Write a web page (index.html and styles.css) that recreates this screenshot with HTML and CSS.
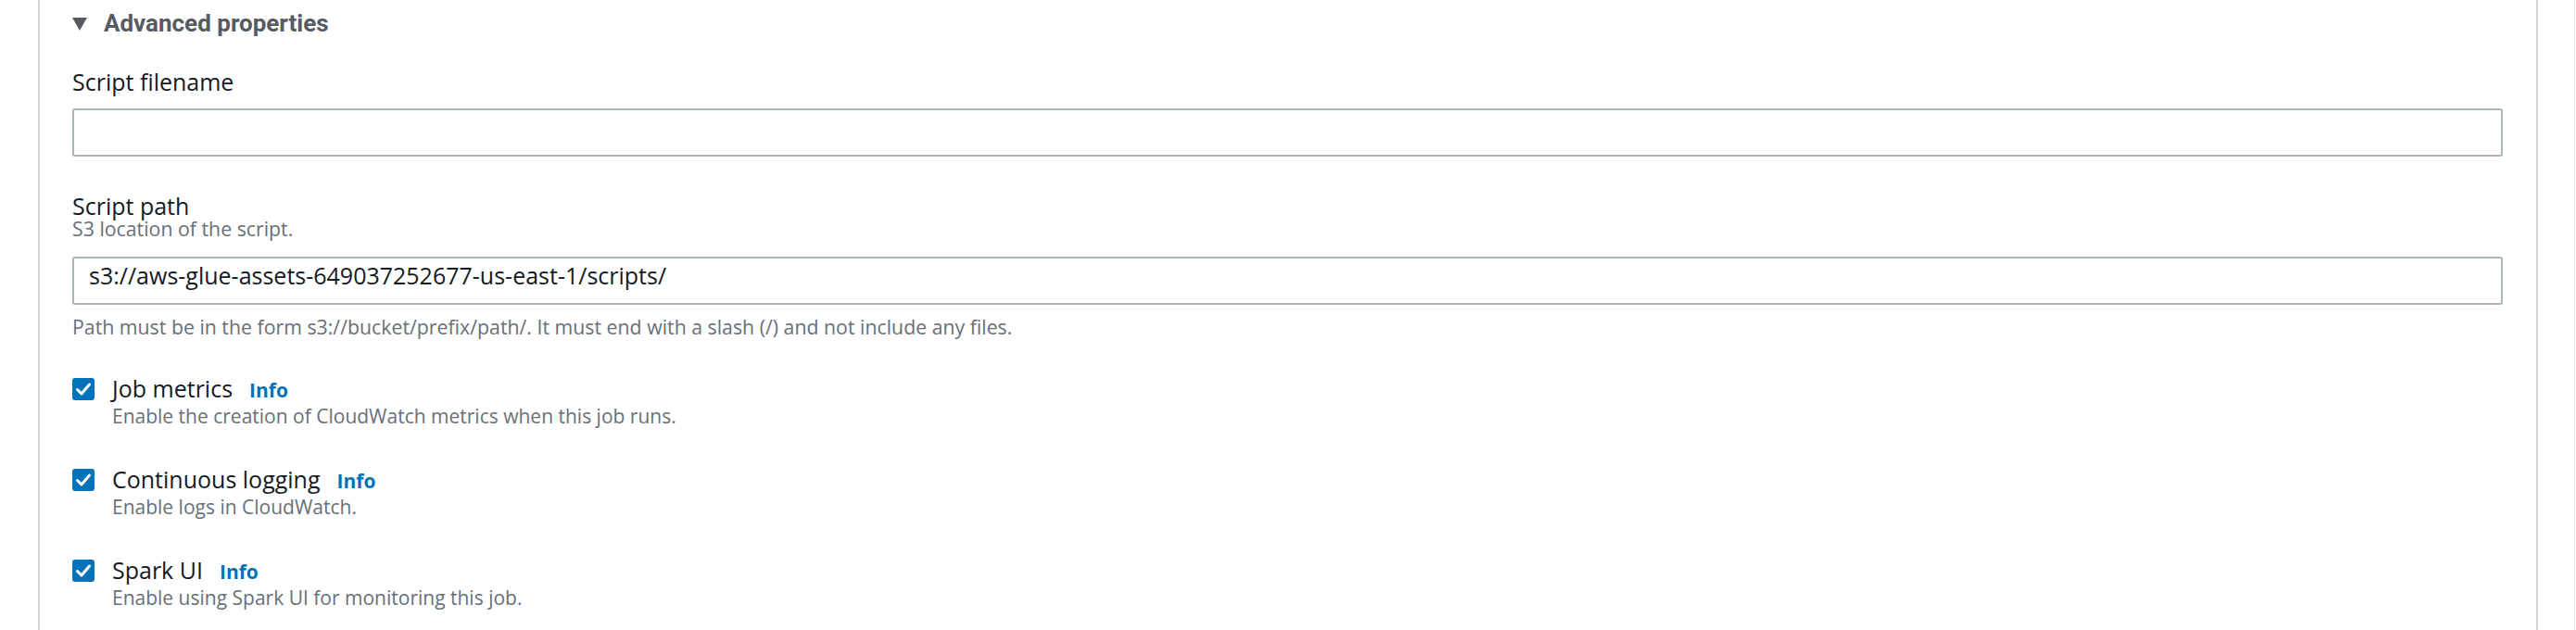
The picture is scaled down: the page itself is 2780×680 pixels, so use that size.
FILE: index.html
```html
<!DOCTYPE html>
<html lang="en">
<head>
<meta charset="utf-8">
<title>Advanced properties</title>
<link rel="stylesheet" href="styles.css">
</head>
<body>
<div class="page">
  <section class="card">
    <div class="section-head">
      <svg class="caret" width="16" height="14" viewBox="0 0 16 14" aria-hidden="true"><polygon points="0,0 16,0 8,14" fill="#545b64"/></svg>
      <h2 class="section-title">Advanced properties</h2>
    </div>

    <div class="field field-first">
      <label class="label" for="fname">Script filename</label>
      <input class="input input-first" id="fname" type="text" value="">
    </div>

    <div class="field field-second">
      <label class="label label-tight" for="fpath">Script path</label>
      <div class="desc">S3 location of the script.</div>
      <input class="input input-second" id="fpath" type="text" value="s3://aws-glue-assets-649037252677-us-east-1/scripts/">
      <div class="constraint">Path must be in the form s3://bucket/prefix/path/. It must end with a slash (/) and not include any files.</div>
    </div>

    <div class="checks">
      <div class="check">
        <span class="check-box"><svg width="24" height="24" viewBox="0 0 24 24" aria-hidden="true"><polyline points="5.5,12.5 10,17 18.5,7" fill="none" stroke="#fff" stroke-width="3" stroke-linecap="round" stroke-linejoin="round"/></svg></span>
        <div class="check-text">
          <div class="check-label">Job metrics<a class="info" href="#">Info</a></div>
          <div class="check-desc">Enable the creation of CloudWatch metrics when this job runs.</div>
        </div>
      </div>
      <div class="check">
        <span class="check-box"><svg width="24" height="24" viewBox="0 0 24 24" aria-hidden="true"><polyline points="5.5,12.5 10,17 18.5,7" fill="none" stroke="#fff" stroke-width="3" stroke-linecap="round" stroke-linejoin="round"/></svg></span>
        <div class="check-text">
          <div class="check-label">Continuous logging<a class="info" href="#">Info</a></div>
          <div class="check-desc">Enable logs in CloudWatch.</div>
        </div>
      </div>
      <div class="check">
        <span class="check-box"><svg width="24" height="24" viewBox="0 0 24 24" aria-hidden="true"><polyline points="5.5,12.5 10,17 18.5,7" fill="none" stroke="#fff" stroke-width="3" stroke-linecap="round" stroke-linejoin="round"/></svg></span>
        <div class="check-text">
          <div class="check-label">Spark UI<a class="info" href="#">Info</a></div>
          <div class="check-desc">Enable using Spark UI for monitoring this job.</div>
        </div>
      </div>
    </div>
  </section>
</div>
</body>
</html>
```

FILE: styles.css
```css
* { box-sizing: border-box; }

html, body {
  margin: 0;
  padding: 0;
  background: #ffffff;
  font-family: "Open Sans", "Liberation Sans", sans-serif;
  color: #16191f;
  overflow: hidden;
}

.page {
  width: 2779px;
  height: 680px;
  padding-left: 41px;
  border-right: 1px solid #e3e6e8;
}

.card {
  width: 2698px;
  min-height: 680px;
  border-left: 2px solid #d5dbdb;
  border-right: 2px solid #d5dbdb;
  padding: 9px 36px 0 35px;
  display: flex;
  flex-direction: column;
}

.section-head {
  display: flex;
  align-items: center;
  gap: 18px;
  height: 32px;
}

.caret { display: block; margin-top: 1px; }

.section-title {
  margin: 0;
  font-family: Roboto, "Open Sans", sans-serif;
  font-size: 26px;
  line-height: 32px;
  font-weight: 700;
  color: #545b64;
}

.field { display: flex; flex-direction: column; }
.field-first { margin-top: 33px; }
.field-second { margin-top: 41px; }

.label {
  font-size: 25px;
  line-height: 28px;
  color: #16191f;
}
.label-tight { line-height: 24px; }

.input-first { margin-top: 15px; }

.desc {
  margin-top: 3px;
  font-size: 21.3px;
  line-height: 20px;
  color: #687078;
}

.input {
  display: block;
  width: 100%;
  height: 52px;
  border: 2px solid #aab7b8;
  border-radius: 3px;
  padding: 2px 14px 14px 16px;
  font-family: "Open Sans", "Liberation Sans", sans-serif;
  font-size: 25px;
  color: #16191f;
  background: #ffffff;
  outline: none;
}

.input-second { margin-top: 20px; }

.constraint {
  margin-top: 12px;
  font-size: 21.3px;
  line-height: 24px;
  color: #687078;
}

.checks {
  margin-top: 38px;
  display: flex;
  flex-direction: column;
  gap: 38px;
}

.check {
  display: flex;
  align-items: flex-start;
  gap: 19px;
}

.check-box {
  flex: none;
  width: 24px;
  height: 24px;
  margin-top: 5px;
  background: #0073bb;
  border-radius: 3px;
}
.check-box svg { display: block; }

.check-label {
  font-size: 25px;
  line-height: 32px;
  height: 32px;
  color: #16191f;
}

.info {
  margin-left: 18px;
  font-size: 21px;
  line-height: 20px;
  font-weight: 700;
  color: #0073bb;
  text-decoration: none;
}

.check-desc {
  font-size: 21px;
  line-height: 28px;
  color: #687078;
}
```
